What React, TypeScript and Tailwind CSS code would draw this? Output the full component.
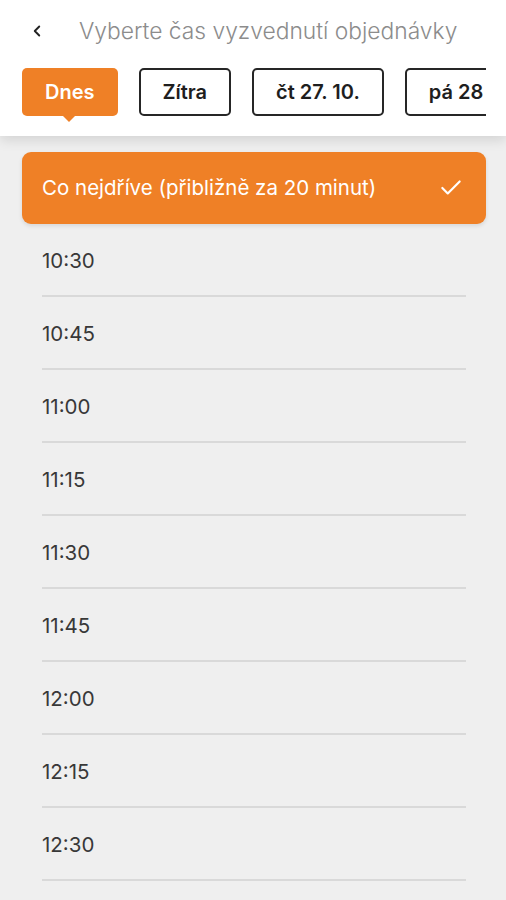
import { Check, ChevronLeft } from "lucide-react";

const days = ["Dnes", "Zítra", "čt 27. 10.", "pá 28"];
const times = ["10:30", "10:45", "11:00", "11:15", "11:30", "11:45", "12:00", "12:15", "12:30"];

export default function App() {
  return (
    <div className="h-[900px] w-[506px] overflow-hidden bg-[#efefef]" style={{ fontFamily: "Inter, 'Noto Sans', sans-serif" }}>
      <header className="relative z-10 h-[136px] bg-white shadow-[0_4px_12px_rgba(0,0,0,0.12)]">
        <div className="flex h-[62px] items-center pl-[28px]">
          <ChevronLeft className="h-[18px] w-[18px] text-[#222]" strokeWidth={2.5} />
          <h1 className="ml-[33px] whitespace-nowrap text-[22.8px] font-light text-[#8c8c8c]">Vyberte čas vyzvednutí objednávky</h1>
        </div>
        <div className="ml-[22px] mr-[20px] overflow-hidden pt-[6px] pb-[14px]">
          <div className="flex gap-[21px]">
            {days.map((d, i) =>
              i === 0 ? (
                <div key={d} className="relative flex h-[48px] flex-none items-center rounded-[5px] bg-[#ef8026] px-[23px] text-[20px] font-semibold text-white">
                  {d}
                  <span className="absolute left-[40px] top-[47px] h-0 w-0 border-x-[7px] border-t-[7px] border-x-transparent border-t-[#ef8026]" />
                </div>
              ) : (
                <div
                  key={d}
                  className={
                    i === days.length - 1
                      ? "flex h-[48px] flex-none items-center rounded-[5px] border-2 border-[#262626] pl-[22px] pr-[40px] text-[20px] font-semibold text-[#1e1e1e]"
                      : "flex h-[48px] flex-none items-center rounded-[5px] border-2 border-[#262626] px-[22px] text-[20px] font-semibold text-[#1e1e1e]"
                  }
                >
                  {d}
                </div>
              )
            )}
          </div>
        </div>
      </header>

      <main className="pl-[22px] pr-[20px] pt-[16px]">
        <div className="flex h-[72px] items-center justify-between rounded-[9px] bg-[#ef8026] pl-[20px] pr-[22px] shadow-[0_2px_4px_rgba(0,0,0,0.1)]">
          <span className="text-[20.5px] text-white">Co nejdříve (přibližně za 20 minut)</span>
          <Check className="h-[26px] w-[26px] text-white" strokeWidth={2} />
        </div>
        <ul className="ml-[20px] mr-[20px]">
          {times.map((t) => (
            <li key={t} className="flex h-[73px] items-center border-b-2 border-[#d9d9d9] pt-[3px] text-[20.5px] text-[#383838]">
              {t}
            </li>
          ))}
        </ul>
      </main>
    </div>
  );
}
